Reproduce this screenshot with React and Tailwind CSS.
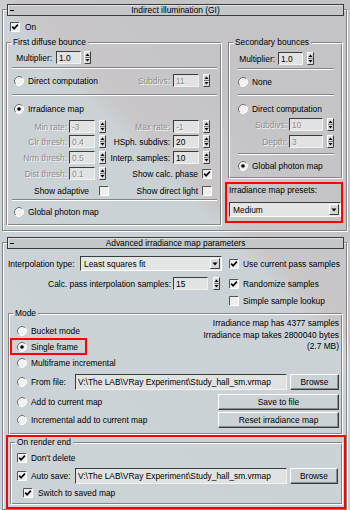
import React from "react";

const dimText = "text-[#8d8d8d] [text-shadow:1px_1px_0_#f6f6f6]";

const Field = ({ className = "", dim, children }) => (
  <div
    className={`flex h-[13px] items-center overflow-hidden whitespace-nowrap border border-t-[#3c3c3c] border-l-[#3c3c3c] border-b-[#f2f2f2] border-r-[#f2f2f2] bg-[#e1e2e2] pl-[2px] ${dim ? dimText : ""} ${className}`}
  >
    {children}
  </div>
);

const Arrows = ({ className = "" }) => (
  <svg width="7" height="13" viewBox="0 0 7 13" className={`shrink-0 ${className}`}>
    <rect width="7" height="13" fill="#d9dadb" />
    <path d="M0.5 12.5V0.5H6.5" stroke="#ffffff" fill="none" />
    <path d="M0.5 12.5H6.5V0.5" stroke="#3c3c3c" fill="none" />
    <path d="M1 6.5H6" stroke="#7c7c7c" />
    <path d="M1.5 5L3.5 2.5L5.5 5Z" fill="#000" />
    <path d="M1.5 8L3.5 10.5L5.5 8Z" fill="#000" />
  </svg>
);

const Spin = ({ w, v, dim, gap = "ml-[4px]" }) => (
  <>
    <Field className={w} dim={dim}>
      {v}
    </Field>
    <Arrows className={gap} />
  </>
);

const Radio = ({ on }) => (
  <svg width="10" height="10" viewBox="0 0 10 10" className="shrink-0">
    <circle cx="5" cy="5" r="4.5" fill="#f1f1f1" />
    <path d="M1.82 8.18A4.5 4.5 0 0 1 8.18 1.82" stroke="#6e6e6e" fill="none" />
    <path d="M8.18 1.82A4.5 4.5 0 0 1 1.82 8.18" stroke="#ffffff" fill="none" />
    {on && <circle cx="5" cy="5" r="1.8" fill="#000" />}
  </svg>
);

const Check = ({ on, className = "" }) => (
  <svg width="10" height="10" viewBox="0 0 10 10" className={`shrink-0 ${className}`}>
    <rect x="0.5" y="0.5" width="9" height="9" fill="#eeeeee" />
    <path d="M0.5 9.5V0.5H9.5" stroke="#555" fill="none" />
    <path d="M0.5 9.5H9.5V0.5" stroke="#fff" fill="none" />
    {on && <path d="M2.2 4.6L4.1 6.7L7.9 2.6" stroke="#000" strokeWidth="1.6" fill="none" />}
  </svg>
);

const Opt = ({ on, className = "", children }) => (
  <div className={`flex items-center ${className}`}>
    <Radio on={on} />
    <span className="ml-[4px] whitespace-nowrap">{children}</span>
  </div>
);

const Sep = ({ className = "" }) => (
  <div className={`h-[2px] border-t border-b border-t-[#848484] border-b-white ${className}`} />
);

const Btn = ({ className = "", children }) => (
  <div
    className={`flex items-center justify-center border border-t-white border-l-white border-b-[#3c3c3c] border-r-[#3c3c3c] shadow-[inset_-1px_-1px_0_#8c8c8c] ${className}`}
  >
    {children}
  </div>
);

const DropBtn = () => (
  <svg width="10" height="11" viewBox="0 0 10 11" className="mr-[1px] shrink-0">
    <rect width="10" height="11" fill="#d6d7d8" />
    <path d="M0.5 10.5V0.5H9.5" stroke="#fff" fill="none" />
    <path d="M0.5 10.5H9.5V0.5" stroke="#3c3c3c" fill="none" />
    <path d="M2.5 4.5H7.5L5 7.5Z" fill="#000" />
  </svg>
);

const Select = ({ className = "", children }) => (
  <div
    className={`flex items-center border border-t-[#3c3c3c] border-l-[#3c3c3c] border-b-white border-r-white bg-[#e4e5e5] pl-[3px] ${className}`}
  >
    <span className="flex-1">{children}</span>
    <DropBtn />
  </div>
);

const Group = ({ label, className = "", bodyClass = "", children }) => (
  <div className={`grid ${className}`}>
    <fieldset className="col-start-1 row-start-1 min-w-0 translate-x-px translate-y-px border border-white">
      <legend className="ml-[4px] px-[2px] leading-[10px] text-transparent">{label}</legend>
    </fieldset>
    <fieldset className={`col-start-1 row-start-1 min-w-0 border border-[#848484] ${bodyClass}`}>
      <legend className="ml-[4px] px-[2px] leading-[10px]">{label}</legend>
      {children}
    </fieldset>
  </div>
);

const Header = ({ title }) => (
  <div className="-mt-[6px] ml-[4px] mr-[2px] flex h-[12px] items-center border border-[#3a3a3a] bg-[#c4c7c9] shadow-[inset_1px_1px_0_#e6e6e6]">
    <div className="flex w-[12px] pl-[2px]">
      <div className="h-[1px] w-[4px] bg-black" />
    </div>
    <span className="flex-1 text-center">{title}</span>
    <span className="w-[12px]" />
  </div>
);

const Rollout = ({ title, className = "", children }) => (
  <div
    className={`ml-[2px] w-[345px] border border-[#848484] shadow-[1px_1px_0_#fff,inset_1px_1px_0_#fff] ${className}`}
  >
    <Header title={title} />
    {children}
  </div>
);

export default function App() {
  return (
    <div className="h-[510px] w-[350px] overflow-hidden bg-[linear-gradient(45deg,#ccd3d6_0%,#cbd2d5_58%,#c9c6c8_61%,#c5c5c7_72%,#c4c4c6_100%)] pt-[9px] text-[8.4px] leading-[10px] text-black [font-family:'Liberation_Sans',Arial,sans-serif]">
      <Rollout title="Indirect illumination (GI)" className="pb-[5px]">
        <div className="mt-[6px] flex h-[10px] items-center pl-[7px]">
          <Check on />
          <span className="ml-[5px]">On</span>
        </div>

        <div className="mt-[5px] flex items-start">
          <Group label="First diffuse bounce" className="ml-[3px] w-[215px]" bodyClass="pb-[6px]">
            <div className="mt-[4px] flex h-[13px] items-center">
              <div className="w-[49px] pr-[4px] text-right">Multiplier:</div>
              <Spin w="w-[25px]" v="1.0" gap="ml-[3px]" />
            </div>
            <Sep className="mt-[3px] ml-[5px] mr-[3px]" />
            <div className="mt-[5px] flex h-[13px] items-center">
              <div className="flex w-[166px] items-center justify-between pl-[7px] pr-[3px]">
                <Opt>Direct computation</Opt>
                <span className={dimText}>Subdivs:</span>
              </div>
              <Spin w="w-[26px]" v="11" dim />
            </div>
            <Sep className="mt-[7px] ml-[5px] mr-[3px]" />
            <Opt on className="mt-[6px] h-[13px] pl-[7px]">
              Irradiance map
            </Opt>

            <div className="mt-[5px] flex h-[13px] items-center">
              <div className={`w-[62px] pr-[2px] text-right ${dimText}`}>Min rate:</div>
              <Spin w="w-[26px]" v="-3" dim />
              <div className={`w-[67px] pr-[3px] text-right ${dimText}`}>Max rate:</div>
              <Spin w="w-[26px]" v="-1" dim />
            </div>
            <div className="mt-[2px] flex h-[13px] items-center">
              <div className={`w-[62px] pr-[2px] text-right ${dimText}`}>Clr thresh:</div>
              <Spin w="w-[26px]" v="0.4" dim />
              <div className="w-[67px] pr-[3px] text-right">HSph. subdivs:</div>
              <Spin w="w-[26px]" v="20" />
            </div>
            <div className="mt-[3px] flex h-[13px] items-center">
              <div className={`w-[62px] pr-[2px] text-right ${dimText}`}>Nrm thresh:</div>
              <Spin w="w-[26px]" v="0.5" dim />
              <div className="w-[67px] pr-[3px] text-right">Interp. samples:</div>
              <Spin w="w-[26px]" v="10" />
            </div>
            <div className="mt-[3px] flex h-[13px] items-center">
              <div className={`w-[62px] pr-[2px] text-right ${dimText}`}>Dist thresh:</div>
              <Spin w="w-[26px]" v="0.1" dim />
              <div className="w-[96px] pr-[4px] text-right">Show calc. phase</div>
              <Check on />
            </div>
            <div className="mt-[4px] flex h-[13px] items-center">
              <div className="w-[92px] pr-[10px] text-right">Show adaptive</div>
              <Check />
              <div className="w-[93px] pr-[4px] text-right">Show direct light</div>
              <Check />
            </div>
            <Sep className="mt-[2px] ml-[5px] mr-[3px]" />
            <Opt className="mt-[4px] h-[13px] pl-[7px]">Global photon map</Opt>
          </Group>

          <div className="ml-[4px] flex w-[118px] flex-col">
            <Group label="Secondary bounces" className="ml-[3px] w-[114px]" bodyClass="pb-[5px]">
              <div className="mt-[5px] flex h-[13px] items-center">
                <div className="w-[49px] pr-[3px] text-right">Multiplier:</div>
                <Spin w="w-[25px]" v="1.0" />
              </div>
              <Sep className="mt-[3px] ml-[9px] mr-[7px]" />
              <Opt className="mt-[5px] h-[13px] pl-[9px]">None</Opt>
              <Sep className="mt-[6px] ml-[9px] mr-[7px]" />
              <Opt className="mt-[6px] h-[13px] pl-[9px]">Direct computation</Opt>
              <div className="mt-[3px] flex h-[13px] items-center">
                <div className={`w-[60px] pr-[2px] text-right ${dimText}`}>Subdivs:</div>
                <Spin w="w-[34px]" v="10" dim />
              </div>
              <div className="mt-[4px] flex h-[13px] items-center">
                <div className={`w-[60px] pr-[2px] text-right ${dimText}`}>Depth:</div>
                <Spin w="w-[34px]" v="3" dim />
              </div>
              <Sep className="mt-[5px] ml-[9px] mr-[7px]" />
              <Opt on className="mt-[4px] h-[13px] pl-[9px]">
                Global photon map
              </Opt>
            </Group>

            <div className="mt-[4px] h-[41px] border-2 border-[#f00] pl-[2px] pt-[1px]">
              <div>Irradiance map presets:</div>
              <Select className="mt-[7px] h-[15px] w-[112px]">Medium</Select>
            </div>
          </div>
        </div>
      </Rollout>

      <Rollout title="Advanced irradiance map parameters" className="mt-[11px]">
        <div className="mt-[7px] flex h-[15px] items-center">
          <div className="w-[77px] pl-[5px]">Interpolation type:</div>
          <Select className="h-[15px] w-[142px]">Least squares fit</Select>
          <Check on className="ml-[7px]" />
          <span className="ml-[4px]">Use current pass samples</span>
        </div>
        <div className="mt-[6px] flex h-[13px] items-center">
          <div className="w-[170px] pr-[2px] text-right">Calc. pass interpolation samples:</div>
          <Spin w="w-[35px]" v="15" gap="ml-[5px]" />
          <Check on className="ml-[9px]" />
          <span className="ml-[4px]">Randomize samples</span>
        </div>
        <div className="mt-[4px] flex h-[13px] items-center pl-[226px]">
          <Check />
          <span className="ml-[4px]">Simple sample lookup</span>
        </div>

        <Group label="Mode" className="ml-[5px] mt-[1px] w-[334px]" bodyClass="pb-[5px]">
          <div className="flex items-start justify-between">
            <div className="mt-[5px] flex flex-col">
              <Opt className="h-[15px] pl-[8px]">Bucket mode</Opt>
              <Opt on className="ml-[1px] h-[17px] w-[77px] border-2 border-[#f00] pl-[5px]">
                Single frame
              </Opt>
              <Opt className="h-[16px] pl-[8px]">Multiframe incremental</Opt>
            </div>
            <div className="pr-[2px] text-right leading-[11.5px]">
              Irradiance map has 4377 samples
              <br />
              Irradiance map takes 2800040 bytes
              <br />
              (2.7 MB)
            </div>
          </div>
          <div className="mt-[3px] flex h-[16px] items-center">
            <Opt className="w-[66px] pl-[8px]">From file:</Opt>
            <Field className="h-[16px] w-[212px] bg-[#d4d6d7]">V:\The LAB\VRay Experiment\Study_hall_sm.vrmap</Field>
            <Btn className="ml-[3px] h-[16px] w-[49px]">Browse</Btn>
          </div>
          <div className="mt-[4px] flex h-[16px] items-center">
            <Opt className="w-[209px] pl-[8px]">Add to current map</Opt>
            <Btn className="h-[16px] w-[121px]">Save to file</Btn>
          </div>
          <div className="mt-[2px] flex h-[16px] items-center">
            <Opt className="w-[209px] pl-[8px]">Incremental add to current map</Opt>
            <Btn className="h-[16px] w-[121px]">Reset irradiance map</Btn>
          </div>
        </Group>

        <div className="ml-[3px] mt-[1px] w-[340px] border-2 border-[#f00] px-[2px] pb-[3px]">
          <Group label="On render end" bodyClass="pb-[4px]">
            <div className="mt-[4px] flex h-[13px] items-center pl-[6px]">
              <Check on />
              <span className="ml-[4px]">{"Don't delete"}</span>
            </div>
            <div className="mt-[4px] flex h-[16px] items-center">
              <div className="flex w-[64px] items-center pl-[6px]">
                <Check on />
                <span className="ml-[4px]">Auto save:</span>
              </div>
              <Field className="h-[16px] w-[212px] bg-[#d4d6d7]">V:\The LAB\VRay Experiment\Study_hall_sm.vrmap</Field>
              <Btn className="ml-[3px] h-[16px] w-[48px]">Browse</Btn>
            </div>
            <div className="mt-[2px] flex h-[13px] items-center pl-[12px]">
              <Check on />
              <span className="ml-[5px]">Switch to saved map</span>
            </div>
          </Group>
        </div>
      </Rollout>
    </div>
  );
}
